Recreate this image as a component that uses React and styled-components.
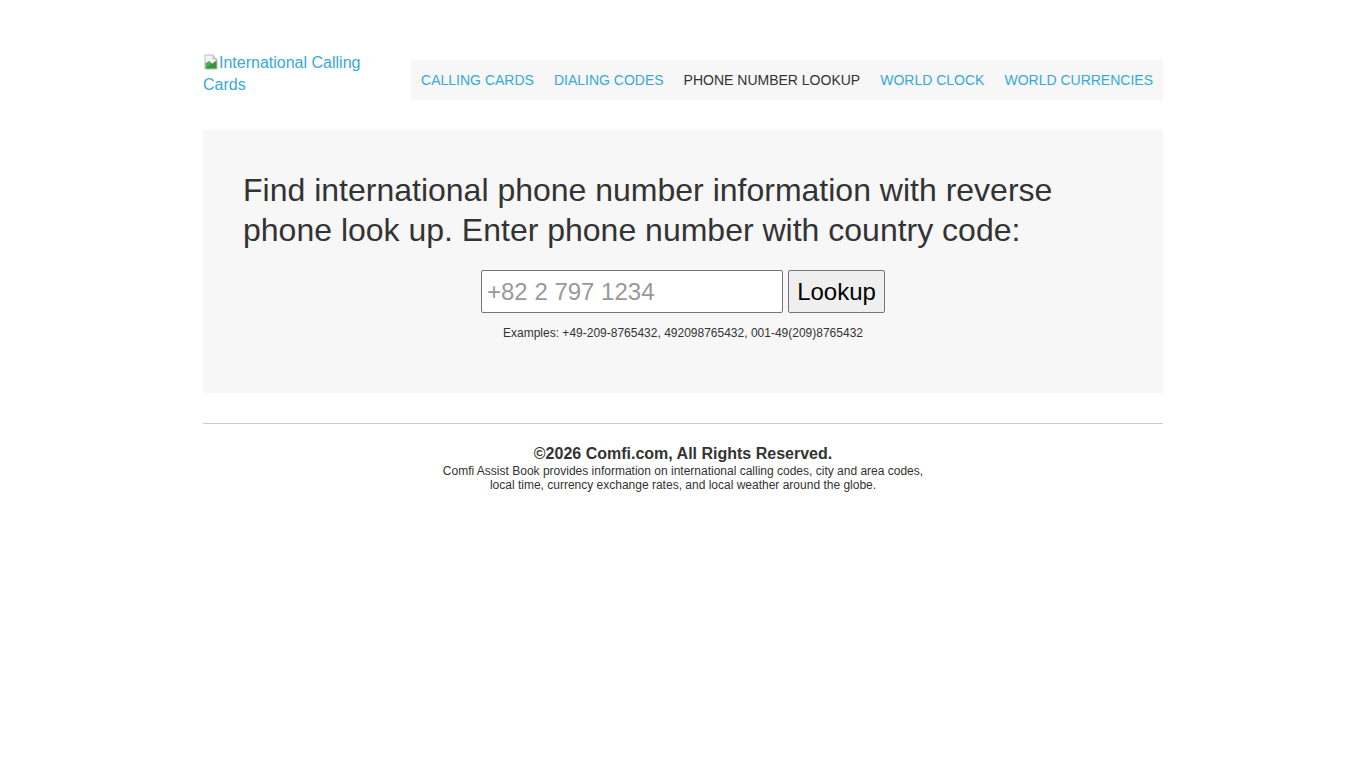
import React from "react";
import styled, { createGlobalStyle } from "styled-components";

const Global = createGlobalStyle`
  html, body { margin: 0; padding: 0; background: #fff; }
  body { font-family: "Liberation Sans", Arial, sans-serif; color: #333; }
  * { box-sizing: border-box; }
`;

const Page = styled.div`
  width: 960px;
  margin: 0 auto;
  padding-top: 52px;
`;

const Header = styled.header`
  display: flex;
  justify-content: space-between;
  align-items: flex-start;
`;

const Logo = styled.a`
  display: inline-block;
  width: 170px;
  font-size: 16px;
  line-height: 22px;
  color: #36a9d6;
  text-decoration: none;
`;

const BrokenIcon = styled.svg`
  width: 16px;
  height: 16px;
  vertical-align: -2px;
`;

const Nav = styled.nav`
  display: flex;
  margin-top: 8px;
  background: #f7f7f7;
  height: 40px;
  align-items: center;
`;

const NavItem = styled.a`
  display: block;
  padding: 0 10px;
  font-size: 14px;
  line-height: 40px;
  text-transform: uppercase;
  text-decoration: none;
  color: ${(p) => (p.$active ? "#333" : "#36a9d6")};
`;

const Jumbo = styled.section`
  margin-top: 30px;
  background: #f7f7f7;
  padding: 40px 40px 52px;
`;

const Heading = styled.h1`
  margin: 0;
  font-size: 32px;
  line-height: 40px;
  font-weight: normal;
  color: #333;
`;

const Form = styled.form`
  display: flex;
  justify-content: center;
  gap: 5px;
  margin-top: 20px;
`;

const Input = styled.input`
  width: 302px;
  height: 43px;
  padding: 0 5px;
  font-family: "Liberation Sans", Arial, sans-serif;
  font-size: 24px;
  color: #333;
  border: 1px solid #767676;
  border-radius: 2px;
  background: #fff;
  &::placeholder { color: #999; }
`;

const Button = styled.button`
  height: 43px;
  padding: 0 4px;
  width: 97px;
  font-family: "Liberation Sans", Arial, sans-serif;
  font-size: 24px;
  color: #000;
  background: #efefef;
  border: 1px solid #767676;
  border-radius: 2px;
`;

const Examples = styled.p`
  margin: 13px 0 0;
  text-align: center;
  font-size: 12px;
  line-height: 15px;
  color: #333;
`;

const Rule = styled.hr`
  margin: 30px 0 0;
  border: 0;
  border-top: 1px solid #ccc;
`;

const Footer = styled.footer`
  text-align: center;
  padding-top: 20px;
`;

const Copy = styled.div`
  font-size: 16px;
  line-height: 20px;
  font-weight: bold;
  color: #333;
`;

const About = styled.div`
  font-size: 12px;
  line-height: 14px;
  color: #333;
`;

export default function App() {
  const items = [
    "Calling Cards",
    "Dialing Codes",
    "Phone Number Lookup",
    "World Clock",
    "World Currencies",
  ];
  return (
    <>
      <Global />
      <Page>
        <Header>
          <Logo href="#">
            <BrokenIcon viewBox="0 0 16 16">
              <path d="M2 1h8l4 4v10H2z" fill="#f4f4f4" stroke="#bbb" />
              <path d="M2.5 14.5V9l4 -2 3 3 4 -3v7.5z" fill="#4caf50" />
              <path d="M2.5 14.5 13.5 6v8.5z" fill="#2e7d32" opacity="0.6" />
              <path d="M10 1v4h4" fill="#ddd" stroke="#bbb" />
            </BrokenIcon>
            International Calling Cards
          </Logo>
          <Nav>
            {items.map((t, i) => (
              <NavItem key={t} href="#" $active={i === 2}>
                {t}
              </NavItem>
            ))}
          </Nav>
        </Header>
        <Jumbo>
          <Heading>
            Find international phone number information with reverse phone
            look up. Enter phone number with country code:
          </Heading>
          <Form onSubmit={(e) => e.preventDefault()}>
            <Input placeholder="+82 2 797 1234" />
            <Button type="submit">Lookup</Button>
          </Form>
          <Examples>
            Examples: +49-209-8765432, 492098765432, 001-49(209)8765432
          </Examples>
        </Jumbo>
        <Rule />
        <Footer>
          <Copy>©2026 Comfi.com, All Rights Reserved.</Copy>
          <About>
            Comfi Assist Book provides information on international calling
            codes, city and area codes,
            <br />
            local time, currency exchange rates, and local weather around the
            globe.
          </About>
        </Footer>
      </Page>
    </>
  );
}
